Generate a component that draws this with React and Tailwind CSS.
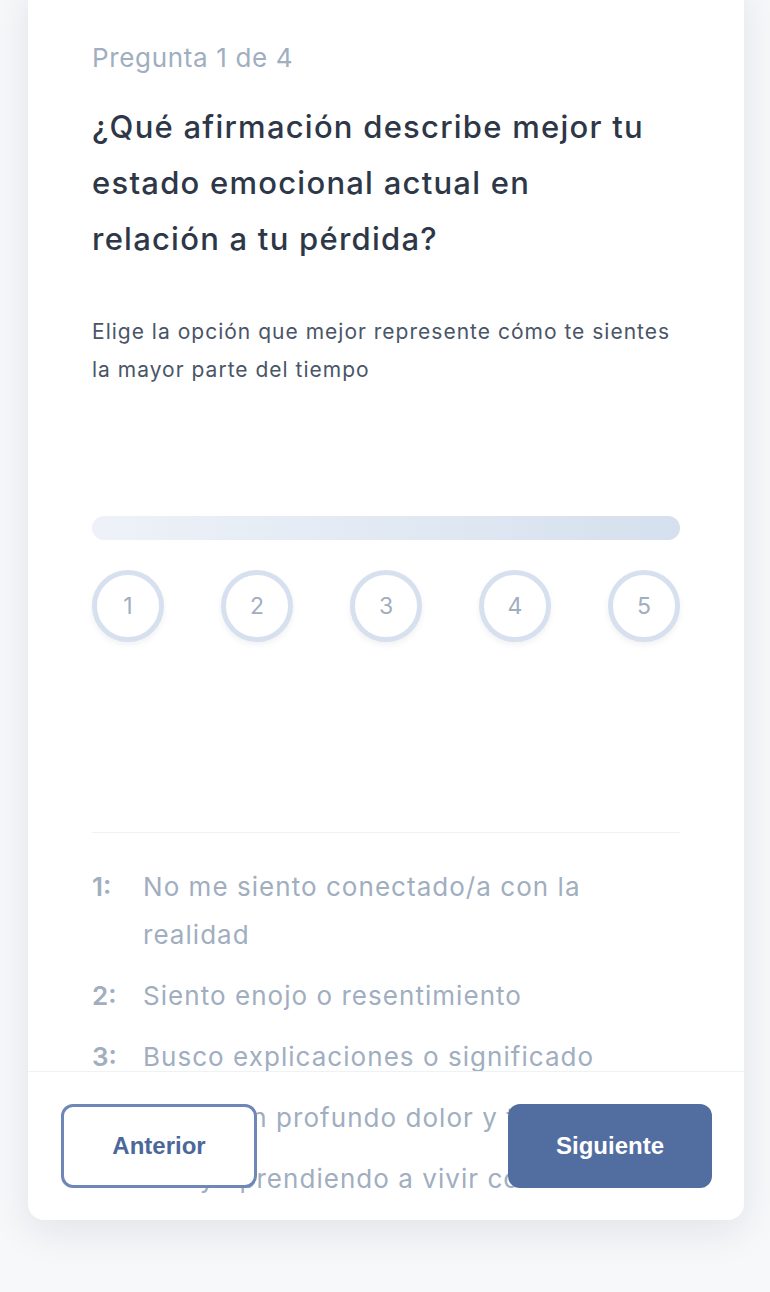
import React, { useState } from "react";

const options = [
  { n: 1, text: "No me siento conectado/a con la realidad" },
  { n: 2, text: "Siento enojo o resentimiento" },
  { n: 3, text: "Busco explicaciones o significado" },
  { n: 4, text: "Siento un profundo dolor y tristeza" },
  { n: 5, text: "Estoy aprendiendo a vivir con ello" },
];

export default function App() {
  const [selected, setSelected] = useState(null);

  return (
    <div className="min-h-screen bg-[#f7f8fa] pl-[28px] pr-[26px] pb-[72px] font-['Inter',sans-serif]">
      <div className="relative -mt-[24px] h-[1244px] overflow-hidden rounded-2xl bg-white shadow-[0_12px_40px_rgba(15,23,42,0.09)]">
        <div className="px-16 pt-[66px]">
          {/* Header */}
          <p className="text-[26px] leading-[32px] text-[#a0aec0] tracking-[0.025em]">
            Pregunta 1 de 4
          </p>
          <h1 className="mt-[25px] max-w-[560px] text-[31px] leading-[56px] font-medium text-[#2d3748] tracking-[0.04em]">
            ¿Qué afirmación describe mejor tu estado emocional actual en
            relación a tu pérdida?
          </h1>
          <p className="mt-[46px] text-[21px] leading-[38px] text-[#4a5568] tracking-[0.048em]">
            Elige la opción que mejor represente cómo te sientes la mayor parte
            del tiempo
          </p>

          {/* Scale */}
          <div className="mt-[127px] h-6 rounded-full bg-gradient-to-r from-[#eef2f8] to-[#d5e0ee]" />
          <div className="mt-[30px] flex justify-between">
            {options.map((o) => (
              <button
                key={o.n}
                onClick={() => setSelected(o.n)}
                className={`flex h-[72px] w-[72px] items-center justify-center rounded-full border-[5px] text-[23px] shadow-[0_3px_6px_rgba(15,23,42,0.06)] ${
                  selected === o.n
                    ? "border-[#516c9e] bg-[#516c9e] text-white"
                    : "border-[#d6e0ee] bg-white text-[#a0aec0]"
                }`}
              >
                {o.n}
              </button>
            ))}
          </div>

          {/* Legend */}
          <div className="mt-[190px] border-t border-[#edf2f7] pt-[30px]">
            <ul className="flex flex-col gap-[13px]">
              {options.map((o) => (
                <li key={o.n} className="flex text-[26px] leading-[48px] text-[#a0aec0] tracking-[0.04em]">
                  <span className="w-[51px] shrink-0 font-semibold tracking-normal">{o.n}:</span>
                  <span className="max-w-[470px]">{o.text}</span>
                </li>
              ))}
            </ul>
          </div>
        </div>

        {/* Footer */}
        <div className="absolute inset-x-0 bottom-0 flex justify-between border-t border-[#edf2f7] py-8 pl-[33px] pr-8 font-['Liberation_Sans',Arial,sans-serif]">
          <button className="h-[84px] w-[196px] rounded-xl border-[3px] border-[#6e86b8] bg-white text-[24px] font-bold text-[#4c679a]">
            Anterior
          </button>
          <button className="h-[84px] w-[204px] rounded-xl bg-[#526d9f] text-[24px] font-bold text-white">
            Siguiente
          </button>
        </div>
      </div>
    </div>
  );
}
